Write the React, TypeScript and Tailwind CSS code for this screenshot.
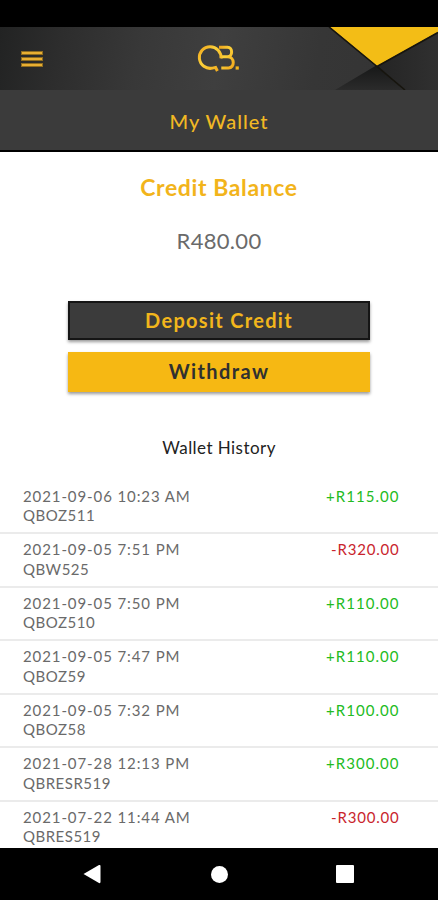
interface Transaction {
  date: string;
  reference: string;
  amount: string;
}

const transactions: Transaction[] = [
  { date: "2021-09-06 10:23 AM", reference: "QBOZ511", amount: "+R115.00" },
  { date: "2021-09-05 7:51 PM", reference: "QBW525", amount: "-R320.00" },
  { date: "2021-09-05 7:50 PM", reference: "QBOZ510", amount: "+R110.00" },
  { date: "2021-09-05 7:47 PM", reference: "QBOZ59", amount: "+R110.00" },
  { date: "2021-09-05 7:32 PM", reference: "QBOZ58", amount: "+R100.00" },
  { date: "2021-07-28 12:13 PM", reference: "QBRESR519", amount: "+R300.00" },
  { date: "2021-07-22 11:44 AM", reference: "QBRES519", amount: "-R300.00" },
];

function Logo() {
  return (
    <svg width="44" height="30" viewBox="0 0 44 30" fill="none">
      <defs>
        <linearGradient id="gold" x1="0" y1="0" x2="1" y2="1">
          <stop offset="0" stopColor="#f0a51c" />
          <stop offset="0.4" stopColor="#fbd13a" />
          <stop offset="1" stopColor="#f3a91c" />
        </linearGradient>
      </defs>
      <g stroke="url(#gold)" strokeWidth="3">
        <path d="M24 14.5A10.85 10.85 0 1 0 15.5 24.1L18.6 23.4L20.4 27" />
        <path d="M22 3.2H30.5C36 3.2 36 12.8 30.5 12.8H24.5M30.5 12.8C38 12.8 38 24 31.5 24H24.3" />
      </g>
      <rect x="38.6" y="22.4" width="3.2" height="3.2" fill="#f5b51e" />
    </svg>
  );
}

function Header() {
  return (
    <header className="relative flex h-[63px] items-center bg-[linear-gradient(100deg,#222323_0%,#2d2d2d_14%,#383838_32%,#3f3f3f_50%,#363636_72%,#333_100%)]">
      {/* Folded corner artwork */}
      <svg className="absolute top-0 right-0" width="110" height="63" viewBox="0 0 110 63">
        <defs>
          <linearGradient id="lowerFold" x1="0" y1="0" x2="0" y2="1">
            <stop offset="0" stopColor="#161717" />
            <stop offset="1" stopColor="#2b2b2b" />
          </linearGradient>
          <linearGradient id="sideFold" x1="0" y1="0" x2="1" y2="0">
            <stop offset="0" stopColor="#242424" />
            <stop offset="1" stopColor="#303030" />
          </linearGradient>
        </defs>
        <path d="M110 4L49 39L77 63H110Z" fill="url(#sideFold)" />
        <path d="M49 38L7 63H77Z" fill="url(#lowerFold)" />
        <path d="M2 0L49 39L110 5V0Z" fill="#f3bd16" />
        <path d="M1 0L49 39.5L77 63M110 5.5L49 39.5" fill="none" stroke="#17150e" strokeWidth="1.6" />
      </svg>
      <button className="ml-[21px] flex w-[22px] flex-col gap-[2px]" aria-label="Menu">
        <span className="h-[4px] w-full border border-[#8e6c20] bg-[#e8ae32]" />
        <span className="h-[4px] w-full border border-[#8e6c20] bg-[#e8ae32]" />
        <span className="h-[4px] w-full border border-[#8e6c20] bg-[#e8ae32]" />
      </button>
      <div className="ml-[154px]">
        <Logo />
      </div>
    </header>
  );
}

function TransactionRow({ date, reference, amount }: Transaction) {
  const isCredit = amount.startsWith("+");

  return (
    <li className="flex h-[53.5px] shrink-0 justify-between border-b-2 border-[#ebebeb] pt-[6px] pr-[38.5px] pl-[23px] text-[15px] leading-[19.5px]">
      <div className="text-[#6a6a6a]">
        <p className="tracking-[0.9px]">{date}</p>
        <p className="tracking-[0.5px]">{reference}</p>
      </div>
      <span className={isCredit ? "tracking-[1.05px] text-[#22bb22]" : "tracking-[0.8px] text-[#c9252d]"}>
        {amount}
      </span>
    </li>
  );
}

export default function App() {
  return (
    <div className="flex h-[900px] w-[438px] flex-col overflow-hidden bg-white font-['Lato',sans-serif]">
      <div className="h-[27px] shrink-0 bg-black" />
      <Header />
      <div className="flex h-[62px] shrink-0 items-center justify-center border-b-2 border-black bg-[#3b3b3b] pt-px text-xl tracking-[1px] text-[#f1b824]">
        <h1 className="font-medium">My Wallet</h1>
      </div>

      <main className="flex min-h-0 flex-1 flex-col overflow-hidden">
        <section className="flex flex-col items-center">
          <h2 className="mt-[19px] text-[23px] leading-8 font-bold tracking-[0.6px] text-[#f2b41b]">
            Credit Balance
          </h2>
          <p className="mt-[22px] text-[22px] leading-8 tracking-[0.3px] text-[#6a6a6a]">R480.00</p>
          <button className="mt-[44px] h-[39px] w-[302px] border-2 border-[#151515] bg-[#3b3b3b] pb-px text-[20px] leading-none font-bold tracking-[1.3px] text-[#f2b61c] shadow-[0_2px_3px_rgba(0,0,0,0.4)]">
            Deposit Credit
          </button>
          <button className="mt-[12px] h-[40px] w-[302px] bg-[#f6b813] pb-[2px] text-[20px] leading-none font-bold tracking-[1.4px] text-[#303030] shadow-[0_2px_3px_rgba(0,0,0,0.4)]">
            Withdraw
          </button>
          <h3 className="mt-[44px] text-[17px] leading-6 tracking-[0.45px] text-[#222]">Wallet History</h3>
        </section>
        <ul className="mt-[20.5px] flex flex-col">
          {transactions.map((transaction) => (
            <TransactionRow key={transaction.date} {...transaction} />
          ))}
        </ul>
      </main>

      {/* Android navigation bar */}
      <nav className="flex h-[52px] shrink-0 items-center justify-between bg-black pr-[84px] pl-[83px]">
        <svg width="18" height="20" viewBox="0 0 18 20" fill="white">
          <path d="M0.5 10L16 1Q17.5 0.5 17.5 2V18Q17.5 19.5 16 19Z" />
        </svg>
        <span className="ml-px size-[17px] rounded-full bg-white" />
        <span className="size-[18px] rounded-[1px] bg-white" />
      </nav>
    </div>
  );
}
